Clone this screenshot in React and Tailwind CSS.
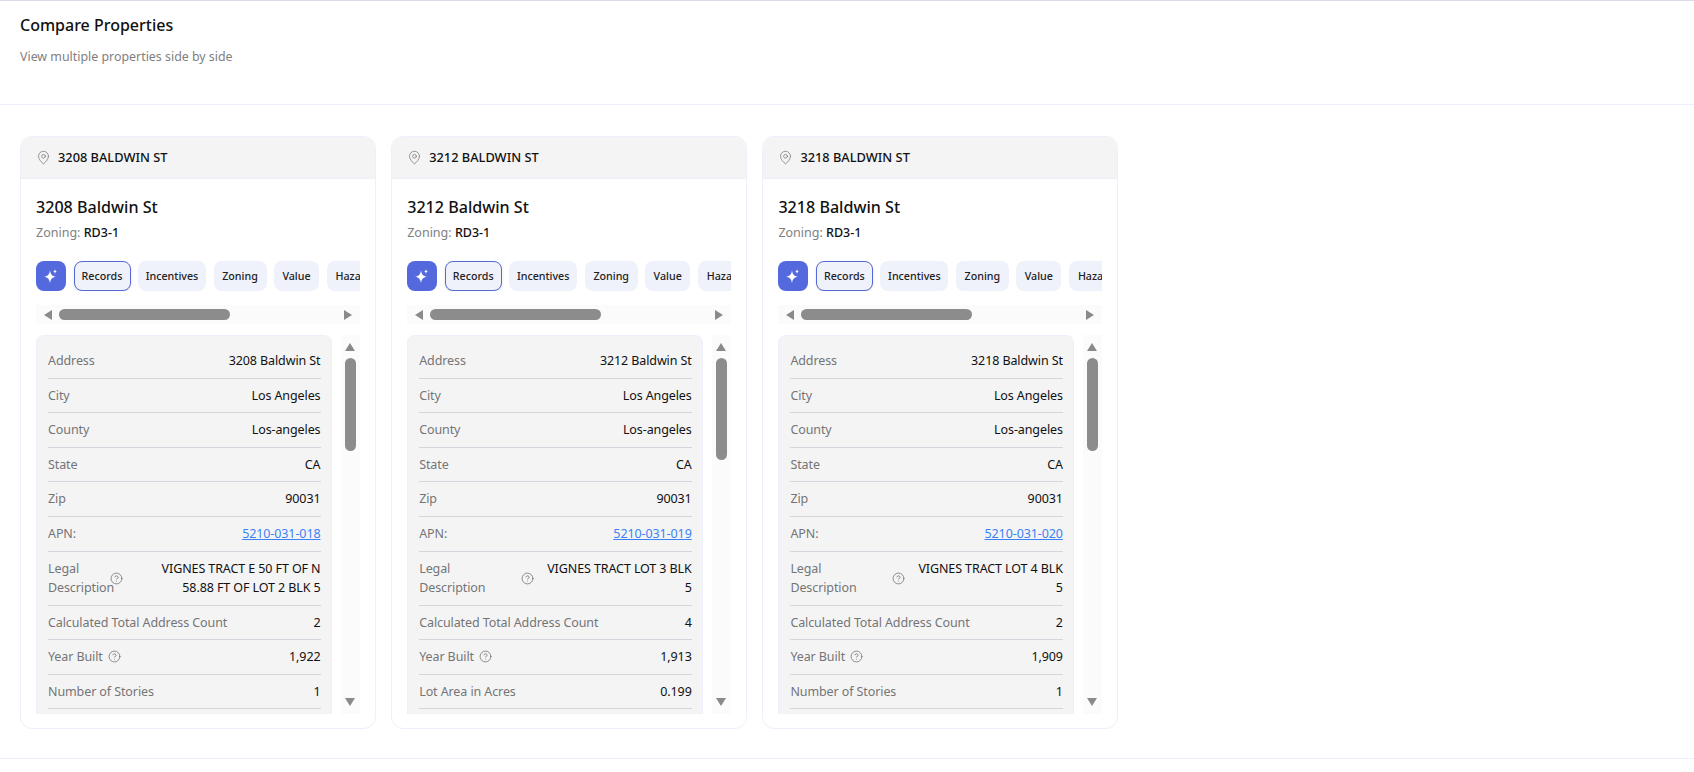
import React from "react";
import { MapPin, CircleHelp } from "lucide-react";

const cards = [
  { head: "3208 BALDWIN ST", title: "3208 Baldwin St", apn: "5210-031-018", legal: "VIGNES TRACT E 50 FT OF N 58.88 FT OF LOT 2 BLK 5", labelW: "w-[62px]", legalW: "max-w-[165px]", count: "2", year: "1,922", lastLabel: "Number of Stories", last: "1", thumb: "h-[93px]" },
  { head: "3212 BALDWIN ST", title: "3212 Baldwin St", apn: "5210-031-019", legal: "VIGNES TRACT LOT 3 BLK 5", labelW: "w-[102px]", legalW: "max-w-[152px]", count: "4", year: "1,913", lastLabel: "Lot Area in Acres", last: "0.199", thumb: "h-[102px]" },
  { head: "3218 BALDWIN ST", title: "3218 Baldwin St", apn: "5210-031-020", legal: "VIGNES TRACT LOT 4 BLK 5", labelW: "w-[102px]", legalW: "max-w-[152px]", count: "2", year: "1,909", lastLabel: "Number of Stories", last: "1", thumb: "h-[93px]" },
];

function Sparkle() {
  return (
    <svg width="14" height="16" viewBox="0 0 14 16" fill="white">
      <path d="M6 2.2 C6.4 6 8 8.1 12 8.7 C8 9.3 6.4 11.4 6 15.2 C5.6 11.4 4 9.3 0 8.7 C4 8.1 5.6 6 6 2.2Z" />
      <path d="M11 1 C11.2 2.5 11.7 3.2 13 3.5 C11.7 3.8 11.2 4.5 11 6 C10.8 4.5 10.3 3.8 9 3.5 C10.3 3.2 10.8 2.5 11 1Z" />
    </svg>
  );
}

function Tri({ dir }) {
  const pts = { left: "8,0 8,10 0,5", right: "0,0 0,10 8,5", up: "0,8 10,8 5,0", down: "0,0 10,0 5,8" }[dir];
  const horizontal = dir === "left" || dir === "right";
  return (
    <svg width={horizontal ? 8 : 10} height={horizontal ? 10 : 8} viewBox={horizontal ? "0 0 8 10" : "0 0 10 8"} className="shrink-0">
      <polygon points={pts} fill="#8a8a8a" />
    </svg>
  );
}

function Row({ label, value, children, link }) {
  return (
    <div className="flex items-center justify-between border-b border-[#d3d6dc] py-[7.1px] leading-[19.4px]">
      {children || <span className="text-[#757575]">{label}</span>}
      {link ? (
        <a className="text-right text-[#3b82f6] underline">{value}</a>
      ) : (
        <div className="text-right text-[#111111]">{value}</div>
      )}
    </div>
  );
}

function Tab({ w, active, children }) {
  return (
    <div
      className={`flex shrink-0 items-center justify-center rounded-[8px] bg-[#eff1fb] text-[10.7px] font-medium text-[#222222] ${w} ${active ? "border border-[#5469d4] shadow-sm" : ""}`}
    >
      {children}
    </div>
  );
}

function Card({ c }) {
  return (
    <div className="flex h-[593px] w-[355.5px] shrink-0 flex-col overflow-hidden rounded-[12px] border border-[#eeeffa] bg-white">
      <div className="flex h-[42px] items-center gap-[7px] border-b border-[#eeeffa] bg-[#f4f4f5] pl-[15px]">
        <MapPin size={15} strokeWidth={1.2} className="text-[#777777]" />
        <span className="text-[12.8px] font-medium text-[#111111]">{c.head}</span>
      </div>
      <div className="flex min-h-0 flex-1 flex-col px-[15px] pb-[14px] pt-[16px]">
        <h2 className="text-[16.1px] font-medium leading-[24px] text-[#111111]">{c.title}</h2>
        <p className="mt-[4px] text-[12.5px] leading-[20px] text-[#808080]">
          Zoning: <span className="font-medium text-[#111111]">RD3-1</span>
        </p>
        <div className="mt-[18px] flex h-[30px] gap-[7.5px] overflow-hidden">
          <div className="flex w-[30px] shrink-0 items-center justify-center rounded-[8px] bg-[#5469de]">
            <Sparkle />
          </div>
          <Tab w="w-[57px]" active>Records</Tab>
          <Tab w="w-[68px]">Incentives</Tab>
          <Tab w="w-[53px]">Zoning</Tab>
          <Tab w="w-[45px]">Value</Tab>
          <div className="flex w-[66px] shrink-0 items-center rounded-[8px] bg-[#eff1fb] pl-[9px] text-[10.7px] font-medium text-[#222222]">Hazards</div>
        </div>
        <div className="mt-[14px] flex h-[19px] items-center bg-[#fbfbfb] px-[8px]">
          <Tri dir="left" />
          <div className="ml-[7px] h-[11px] w-[171px] rounded-full bg-[#8c8c8c]" />
          <div className="flex-1" />
          <Tri dir="right" />
        </div>
        <div className="mt-[11px] flex min-h-0 flex-1 gap-[9px]">
          <div className="min-w-0 flex-1 overflow-hidden rounded-t-[8px] border border-b-0 border-[#eeeffa] bg-[#f4f4f5] pl-[11px] pr-[10px] pt-[8px] text-[12.5px] tracking-[-0.1px]">
            <Row label="Address" value={c.title} />
            <Row label="City" value="Los Angeles" />
            <Row label="County" value="Los-angeles" />
            <Row label="State" value="CA" />
            <Row label="Zip" value="90031" />
            <Row label="APN:" value={c.apn} link />
            <div className="flex items-center justify-between border-b border-[#d3d6dc] py-[7.1px] leading-[19.4px]">
              <div className="flex shrink-0 items-center text-[#757575]">
                <span className={c.labelW}>Legal<br />Description</span>
                <CircleHelp size={13} strokeWidth={1.4} className="shrink-0 text-[#6b6b6b]" />
              </div>
              <div className={`text-right text-[#111111] ${c.legalW}`}>{c.legal}</div>
            </div>
            <Row label="Calculated Total Address Count" value={c.count} />
            <Row value={c.year}>
              <div className="flex items-center gap-[5px] text-[#757575]">
                <span>Year Built</span>
                <CircleHelp size={13} strokeWidth={1.4} className="shrink-0 text-[#6b6b6b]" />
              </div>
            </Row>
            <Row label={c.lastLabel} value={c.last} />
          </div>
          <div className="flex w-[19px] shrink-0 flex-col items-center bg-[#fbfbfb] pb-[8px] pt-[8px]">
            <Tri dir="up" />
            <div className={`mt-[7px] w-[11px] rounded-full bg-[#8c8c8c] ${c.thumb}`} />
            <div className="flex-1" />
            <Tri dir="down" />
          </div>
        </div>
      </div>
    </div>
  );
}

export default function App() {
  return (
    <div className="h-[772px] overflow-hidden bg-white font-['Noto_Sans',sans-serif]">
      <header className="h-[105px] border-b border-t border-b-[#eeeffa] border-t-[#d9dbea] px-[20px] pt-[12px]">
        <h1 className="text-[16px] font-medium leading-[24px] text-[#111111]">Compare Properties</h1>
        <p className="mt-[11px] text-[12.4px] leading-[18px] text-[#808080]">View multiple properties side by side</p>
      </header>
      <main className="flex h-[654px] gap-[15.7px] border-b border-[#eeeffa] px-[20px] pt-[31px]">
        {cards.map((c) => (
          <Card key={c.head} c={c} />
        ))}
      </main>
    </div>
  );
}
